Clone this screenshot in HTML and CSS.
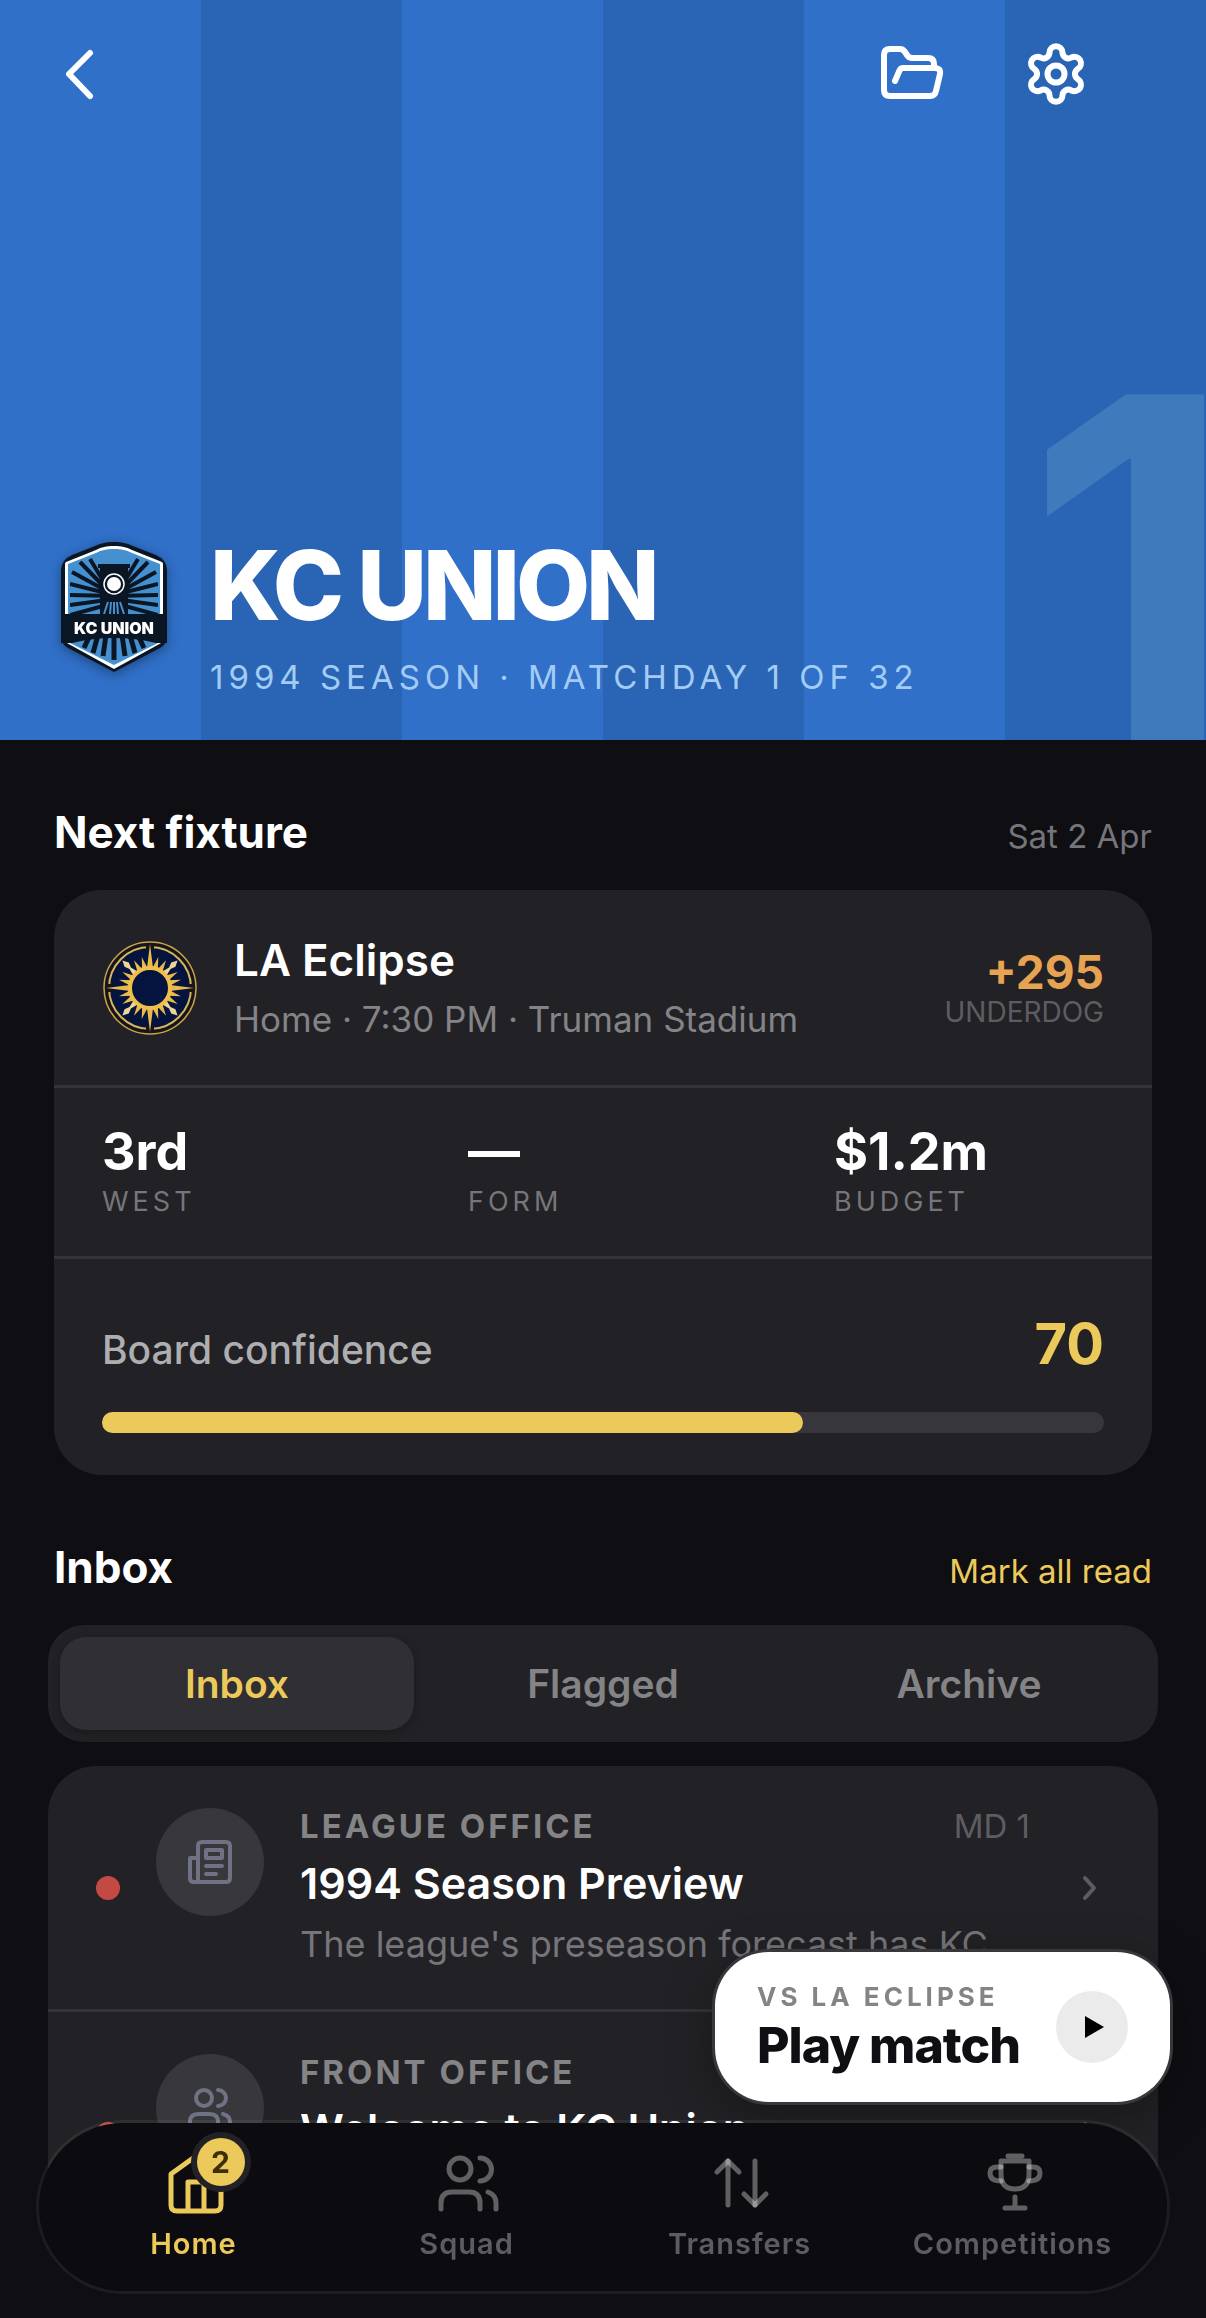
FILE: index.html
```html
<!DOCTYPE html>
<html lang="en">
<head>
    <meta charset="UTF-8">
    <meta name="viewport" content="width=device-width, initial-scale=1.0">
    <title>KC Union</title>
    <link rel="stylesheet" href="styles.css">
</head>
<body>
    <header class="hero">
        <span class="hero-number" aria-hidden="true">1</span>
        <div class="toolbar">
            <button type="button" class="icon-button back" aria-label="Back">
                <svg width="48" height="72" viewBox="0 0 48 72"><path d="M30 17 L9 38 L30 60"/></svg>
            </button>
            <button type="button" class="icon-button" aria-label="Saves">
                <svg width="72" height="72" viewBox="0 0 72 72"><path d="M19 45 L23.500 34.500 Q24.500 32 27.500 32 H59 Q65 32 64 38 L60 55 Q59 60 54 60 H14 Q8 60 8 54 V19 Q8 13 14 13 H24 Q27 13 29 16 L31 19 Q33 22 36 22 H52 Q58 22 58 28 V31"/></svg>
            </button>
            <button type="button" class="icon-button" aria-label="Settings">
                <svg width="72" height="72" viewBox="-36 -38 72 72"><circle r="8.500"/><path d="M-6.500 -21.340 A6.500 6.500 0 0 1 6.500 -21.340 A6 6 0 0 0 15.230 -16.300 A6.500 6.500 0 0 1 21.730 -5.040 A6 6 0 0 0 21.730 5.040 A6.500 6.500 0 0 1 15.230 16.300 A6 6 0 0 0 6.500 21.340 A6.500 6.500 0 0 1 -6.500 21.340 A6 6 0 0 0 -15.230 16.300 A6.500 6.500 0 0 1 -21.730 5.040 A6 6 0 0 0 -21.730 -5.040 A6.500 6.500 0 0 1 -15.230 -16.300 A6 6 0 0 0 -6.500 -21.340 Z"/></svg>
            </button>
        </div>
        <div class="club">
            <svg class="crest" width="108" height="132" viewBox="0 0 108 132" role="img" aria-label="KC Union crest">
                <defs>
                    <clipPath id="crest-inner">
                        <path d="M54 8 C62 8 66 9 72 12 L98 23 V101 L54 125 L10 101 V23 L36 12 C42 9 46 8 54 8Z"/>
                    </clipPath>
                </defs>
                <path fill="#0b1624" d="M54 1 C62 1 66 2 73 5 L96 14 Q107 19 107 29 V96 Q107 103 100 107 L54 131 L8 107 Q1 103 1 96 V29 Q1 19 12 14 L35 5 C42 2 46 1 54 1Z"/>
                <path fill="#fff" d="M54 5 C62 5 66 6 72 9 L102 21 Q103 22 103 23 V101 L54 128 L5 101 V23 Q5 22 6 21 L36 9 C42 6 46 5 54 5Z"/>
                <path fill="#4590cf" d="M54 8 C62 8 66 9 72 12 L100 23 V101 L54 124 L8 101 V23 L36 12 C42 9 46 8 54 8Z"/>
                <g clip-path="url(#crest-inner)" stroke="#0b1624" stroke-width="4">
                    <path d="M54 58 L30 18 M54 56 L20 21 M54 54 L12 31 M54 54 L10 43 M54 55 L10 54 M54 58 L10 64 M54 62 L10 74"/>
                    <path d="M54 58 L78 18 M54 56 L88 21 M54 54 L96 31 M54 54 L98 43 M54 55 L98 54 M54 58 L98 64 M54 62 L98 74"/>
                    <path stroke-width="5" d="M54 90 V119 M46 94 L43 115 M62 94 L65 115 M38 94 L33 112 M70 94 L75 112 M30 94 L24 107 M78 94 L84 107"/>
                </g>
                <path fill="#0b1624" d="M38 23 H70 V27 H68 V73 H40 V27 H38Z"/>
                <path stroke="#4590cf" stroke-width="2" d="M44 73 L48 61 M50 73 L51 61 M54 73 V61 M58 73 L57 61 M64 73 L60 61"/>
                <circle cx="54" cy="43" r="10" fill="#0b1624" stroke="#fff" stroke-width="1.500"/>
                <circle cx="54" cy="43" r="7" fill="#fff"/>
                <path fill="#0b1624" d="M1 73 H107 V102 L96 102 Q54 92 12 102 L1 102Z"/>
                <text class="crest-text" x="54" y="93" text-anchor="middle">KC UNION</text>
            </svg>
            <div>
                <h1>KC UNION</h1>
                <p class="season">1994 SEASON · MATCHDAY 1 OF 32</p>
            </div>
        </div>
    </header>

    <main>
        <div class="section-head">
            <h2>Next fixture</h2>
            <span class="date">Sat 2 Apr</span>
        </div>
        <section class="card fixture">
            <div class="opponent">
                <svg width="96" height="96" viewBox="-48 -48 96 96" role="img" aria-label="LA Eclipse crest">
                    <defs>
                        <path id="ray-long" d="M-3 -20 L0 -44 L3 -20Z"/>
                        <path id="ray-mid" d="M-3 -20 L-1 -28 L-3 -33 L0 -39 L3 -33 L1 -28 L3 -20Z"/>
                        <path id="ray-short" d="M-3 -19 L0 -32 L3 -19Z"/>
                    </defs>
                    <circle r="46" fill="#15151a" stroke="#c9a44d" stroke-width="1.500"/>
                    <circle r="41" fill="#04143e" stroke="#d9b45a" stroke-width="2"/>
                    <g fill="#15151a">
                        <rect x="-4" y="-44" width="8" height="6"/><rect x="-4" y="38" width="8" height="6"/>
                        <rect x="-44" y="-4" width="6" height="8"/><rect x="38" y="-4" width="6" height="8"/>
                    </g>
                    <g fill="#e9b949">
                        <use href="#ray-long"/><use href="#ray-long" transform="rotate(90)"/><use href="#ray-long" transform="rotate(180)"/><use href="#ray-long" transform="rotate(270)"/>
                        <use href="#ray-short" transform="rotate(15)"/><use href="#ray-short" transform="rotate(30)"/><use href="#ray-short" transform="rotate(60)"/><use href="#ray-short" transform="rotate(75)"/>
                        <use href="#ray-short" transform="rotate(105)"/><use href="#ray-short" transform="rotate(120)"/><use href="#ray-short" transform="rotate(150)"/><use href="#ray-short" transform="rotate(165)"/>
                        <use href="#ray-short" transform="rotate(195)"/><use href="#ray-short" transform="rotate(210)"/><use href="#ray-short" transform="rotate(240)"/><use href="#ray-short" transform="rotate(255)"/>
                        <use href="#ray-short" transform="rotate(285)"/><use href="#ray-short" transform="rotate(300)"/><use href="#ray-short" transform="rotate(330)"/><use href="#ray-short" transform="rotate(345)"/>
                    </g>
                    <g fill="#ecd596">
                        <use href="#ray-mid" transform="rotate(45)"/><use href="#ray-mid" transform="rotate(135)"/><use href="#ray-mid" transform="rotate(225)"/><use href="#ray-mid" transform="rotate(315)"/>
                    </g>
                    <circle r="20" fill="#04143e" stroke="#efbf4b" stroke-width="4"/>
                </svg>
                <div class="opponent-info">
                    <h3>LA Eclipse</h3>
                    <p>Home · 7:30 PM · Truman Stadium</p>
                </div>
                <div class="odds">
                    <strong>+295</strong>
                    <span>UNDERDOG</span>
                </div>
            </div>
            <dl class="stats">
                <div><dd>3rd</dd><dt>WEST</dt></div>
                <div><dd>—</dd><dt>FORM</dt></div>
                <div><dd>$1.2m</dd><dt>BUDGET</dt></div>
            </dl>
            <div class="board">
                <div class="board-head">
                    <span>Board confidence</span>
                    <strong>70</strong>
                </div>
                <div class="bar"><div class="bar-fill" style="width: 70%"></div></div>
            </div>
        </section>

        <div class="section-head">
            <h2>Inbox</h2>
            <a href="#inbox">Mark all read</a>
        </div>
        <div class="inbox" id="inbox">
            <div class="tabs">
                <button type="button" class="active">Inbox</button>
                <button type="button">Flagged</button>
                <button type="button">Archive</button>
            </div>
            <div class="card messages">
                <article class="message">
                    <span class="dot"></span>
                    <div class="avatar">
                        <svg width="48" height="48" viewBox="0 0 48 48"><path d="M16 4 H40 Q44 4 44 8 V40 Q44 44 40 44 H8 Q4 44 4 40 V20 H12 M12 44 V8 Q12 4 16 4 M20 12 H36 V20 H20 Z M20 28 H36 M20 36 H30"/></svg>
                    </div>
                    <div class="message-text">
                        <div class="sender"><span>LEAGUE OFFICE</span><time>MD 1</time></div>
                        <h3>1994 Season Preview</h3>
                        <p>The league's preseason forecast has KC</p>
                    </div>
                    <svg class="chevron" width="24" height="36" viewBox="0 0 24 36"><path d="M7 8 L16 18 L7 28"/></svg>
                </article>
                <article class="message">
                    <span class="dot"></span>
                    <div class="avatar">
                        <svg width="48" height="48" viewBox="0 0 48 48"><circle cx="18" cy="14" r="8"/><path d="M4 42 V38 Q4 30 12 30 H24 Q32 30 32 38 V42 M32 6 A8 8 0 0 1 32 22 M37 30 Q44 32 44 38 V42"/></svg>
                    </div>
                    <div class="message-text">
                        <div class="sender"><span>FRONT OFFICE</span></div>
                        <h3>Welcome to KC Union</h3>
                        <p></p>
                    </div>
                    <svg class="chevron" width="24" height="36" viewBox="0 0 24 36"><path d="M7 8 L16 18 L7 28"/></svg>
                </article>
            </div>
        </div>
    </main>

    <button type="button" class="play">
        <span class="play-text">
            <small>VS LA ECLIPSE</small>
            <b>Play match</b>
        </span>
        <span class="play-icon">
            <svg width="24" height="24" viewBox="0 0 24 24"><path d="M5 1 L24 12 L5 23Z"/></svg>
        </span>
    </button>

    <nav class="tabbar">
        <a href="#home" class="active">
            <span class="tab-icon">
                <svg width="66" height="66" viewBox="0 0 66 66"><path d="M35 6 L10 24 V55 Q10 61 16 61 H54 Q60 61 60 55 V24 Z M27 61 V32 H43 V61"/></svg>
                <span class="badge">2</span>
            </span>
            Home
        </a>
        <a href="#squad">
            <svg width="66" height="66" viewBox="0 0 66 66"><circle cx="26" cy="19" r="11"/><path d="M7 59 V53 Q7 42 18 42 H35 Q46 42 46 53 V59 M46 8 A11 11 0 0 1 46 31 M54 42 Q62 45 62 53 V59"/></svg>
            Squad
        </a>
        <a href="#transfers">
            <svg width="66" height="66" viewBox="0 0 66 66"><path d="M21 11 V55"/><path d="M10 22 L21 11 L32 22"/><path d="M48 11 V55"/><path d="M37 44 L48 55 L59 44"/></svg>
            Transfers
        </a>
        <a href="#competitions">
            <svg width="66" height="66" viewBox="0 0 66 66"><path d="M28 6 H42"/><path d="M21 11 H49 V24 Q49 39 35 39 Q21 39 21 24 Z"/><path d="M21 17 H17 Q10 17 10 23 Q10 31 21 31"/><path d="M49 17 H53 Q60 17 60 23 Q60 31 49 31"/><path d="M35 47 V57 M25 58 H45"/></svg>
            Competitions
        </a>
    </nav>
</body>
</html>
```
FILE: styles.css
```css
* {
    box-sizing: border-box;
    margin: 0;
    padding: 0;
}
body {
    font-family: Inter, "Liberation Sans", sans-serif;
    background-color: #0f0e13;
    color: #fff;
}
button {
    font-family: inherit;
    border: none;
    background: none;
    cursor: pointer;
}
a {
    color: #ecc95b;
    text-decoration: none;
}
svg {
    display: block;
    flex: none;
}

/* hero */
.hero {
    position: relative;
    overflow: hidden;
    min-height: 740px;
    display: flex;
    flex-direction: column;
    justify-content: space-between;
    padding: 36px 60px 39px;
    background: repeating-linear-gradient(90deg, #3070c8 0, #3070c8 calc(100% / 6), #2a65b5 calc(100% / 6), #2a65b5 calc(100% / 3));
}
.hero-number {
    position: absolute;
    right: -30px;
    bottom: -13px;
    font-size: 490px;
    line-height: 360px;
    font-weight: 700;
    color: rgba(160, 220, 230, 0.18);
}
.toolbar {
    display: flex;
    gap: 72px;
    padding-right: 54px;
}
.back {
    margin-right: auto;
}
.icon-button svg {
    fill: none;
    stroke: #fff;
    stroke-width: 6;
    stroke-linecap: round;
    stroke-linejoin: round;
}
.club {
    position: relative;
    display: flex;
    align-items: flex-start;
    gap: 42px;
}
.crest {
    margin-top: 4px;
    filter: drop-shadow(0 3px 6px rgba(0, 0, 0, 0.35));
}
.crest-text {
    font-size: 16px;
    font-weight: 900;
    fill: #fff;
}
h1 {
    font-size: 96px;
    line-height: 96px;
    font-weight: 800;
    letter-spacing: -4px;
}
.season {
    margin-top: 20px;
    font-size: 33px;
    line-height: 48px;
    letter-spacing: 5px;
    color: #a3ccf5;
}

/* sections */
main {
    padding: 64px 48px 63px;
}
.section-head {
    display: flex;
    justify-content: space-between;
    align-items: baseline;
    padding: 0 6px;
    margin-bottom: 30px;
    font-size: 33px;
}
h2 {
    font-size: 44px;
    line-height: 56px;
    font-weight: 700;
}
.date {
    color: #76767a;
}
.card {
    background-color: #222125;
    border-radius: 48px;
    overflow: hidden;
}

/* fixture card */
.fixture {
    margin: 0 6px 64px;
}
.opponent {
    display: flex;
    align-items: center;
    gap: 36px;
    padding: 42px 48px;
    border-bottom: 3px solid #343338;
}
.opponent-info {
    flex: 1;
}
.opponent-info h3 {
    font-size: 44px;
    line-height: 56px;
    font-weight: 600;
}
.opponent-info p {
    margin-top: 7px;
    font-size: 35px;
    line-height: 48px;
    color: #848487;
}
.odds {
    text-align: right;
}
.odds strong {
    display: block;
    font-size: 46px;
    line-height: 48px;
    font-weight: 700;
    color: #e6a352;
}
.odds span {
    display: block;
    font-size: 28px;
    line-height: 32px;
    color: #5d5d61;
}
.stats {
    display: grid;
    grid-template-columns: repeat(3, 1fr);
    border-bottom: 3px solid #343338;
}
.stats div {
    padding: 36px 48px;
}
.stats dd {
    font-size: 52px;
    line-height: 56px;
    font-weight: 700;
}
.stats dt {
    margin-top: 4px;
    font-size: 27px;
    line-height: 36px;
    letter-spacing: 4px;
    color: #76767a;
}
.board {
    padding: 53px 48px 42px;
}
.board-head {
    display: flex;
    justify-content: space-between;
    align-items: baseline;
    margin-bottom: 36px;
}
.board-head span {
    font-size: 39px;
    font-weight: 500;
    color: #aeaeb0;
}
.board-head strong {
    font-size: 56px;
    line-height: 64px;
    font-weight: 700;
    color: #ecc95b;
}
.bar {
    height: 21px;
    border-radius: 11px;
    background-color: #37363a;
}
.bar-fill {
    height: 100%;
    border-radius: 11px;
    background-color: #ecc95b;
}

/* inbox */
.tabs {
    display: flex;
    gap: 12px;
    padding: 12px;
    margin-bottom: 24px;
    border-radius: 36px;
    background-color: #222125;
}
.tabs button {
    flex: 1;
    height: 93px;
    border-radius: 26px;
    font-size: 39px;
    font-weight: 600;
    color: #848487;
}
.tabs .active {
    color: #ecc95b;
    background-color: #302f33;
    box-shadow: 0 3px 9px rgba(0, 0, 0, 0.25);
}
.message {
    display: flex;
    align-items: center;
    padding: 42px 56px 42px 48px;
}
.message + .message {
    border-top: 3px solid #343338;
}
.dot {
    width: 24px;
    height: 24px;
    border-radius: 50%;
    background-color: #c34a44;
}
.avatar {
    display: flex;
    align-items: center;
    justify-content: center;
    align-self: flex-start;
    width: 108px;
    height: 108px;
    margin: 0 36px;
    border-radius: 50%;
    background-color: #38373b;
}
.avatar svg {
    fill: none;
    stroke: #6f7285;
    stroke-width: 4;
    stroke-linecap: round;
    stroke-linejoin: round;
}
.message-text {
    flex: 1;
}
.sender {
    display: flex;
    justify-content: space-between;
    font-size: 33px;
    line-height: 36px;
    font-weight: 700;
    letter-spacing: 3px;
    color: #848487;
}
.sender time {
    font-weight: 400;
    letter-spacing: 0;
    color: #5d5d61;
}
.message h3 {
    margin: 12px 0;
    font-size: 43px;
    line-height: 54px;
    font-weight: 600;
}
.message p {
    min-height: 45px;
    font-size: 36px;
    line-height: 45px;
    color: #76767a;
}
.chevron {
    margin-left: 48px;
    fill: none;
    stroke: #5d5d61;
    stroke-width: 4;
    stroke-linecap: round;
    stroke-linejoin: round;
}

/* floating play button */
.play {
    position: fixed;
    right: 36px;
    bottom: 216px;
    display: flex;
    align-items: center;
    gap: 36px;
    height: 150px;
    padding: 0 42px;
    border-radius: 54px;
    background-color: #fff;
    box-shadow: 0 0 0 3px #38373b, 0 12px 48px rgba(0, 0, 0, 0.35);
    color: #0f0e13;
    text-align: left;
}
.play small {
    display: block;
    margin-bottom: 4px;
    font-size: 26px;
    line-height: 32px;
    font-weight: 700;
    letter-spacing: 4px;
    color: #848487;
}
.play b {
    display: block;
    font-size: 50px;
    line-height: 56px;
    font-weight: 800;
    letter-spacing: -1px;
}
.play-icon {
    display: flex;
    align-items: center;
    justify-content: center;
    width: 72px;
    height: 72px;
    border-radius: 50%;
    background-color: #ebebeb;
}

/* bottom tab bar */
.tabbar {
    position: fixed;
    left: 36px;
    right: 36px;
    bottom: 24px;
    display: grid;
    grid-template-columns: repeat(4, 1fr);
    padding: 27px 18px 29px;
    border: 3px solid rgba(255, 255, 255, 0.06);
    border-radius: 87px;
    background-color: #0c0b10;
    background-clip: padding-box;
}
.tabbar a {
    display: flex;
    flex-direction: column;
    align-items: center;
    gap: 10px;
    font-size: 29px;
    line-height: 36px;
    font-weight: 600;
    letter-spacing: 1px;
    color: #5d5d61;
}
.tabbar svg {
    fill: none;
    stroke: rgba(255, 255, 255, 0.35);
    stroke-width: 5;
    stroke-linecap: round;
    stroke-linejoin: round;
}
.tabbar .active {
    color: #ecc95b;
}
.tabbar .active svg {
    stroke: #ecc95b;
}
.tab-icon {
    position: relative;
}
.badge {
    position: absolute;
    top: -12px;
    right: -18px;
    width: 48px;
    height: 48px;
    border-radius: 50%;
    background-color: #ecc95b;
    box-shadow: 0 0 0 6px #222125;
    color: #3d2f05;
    font-size: 30px;
    line-height: 48px;
    font-weight: 700;
    letter-spacing: 0;
    text-align: center;
}
```
